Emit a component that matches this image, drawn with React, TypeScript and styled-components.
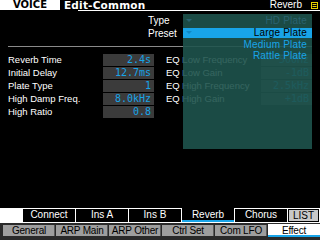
import React from 'react';
import styled, { createGlobalStyle } from 'styled-components';

const CYAN = '#18a4e8';

const GlobalStyle = createGlobalStyle`
  html, body { margin: 0; padding: 0; background: #000; }
  body {
    width: 320px;
    height: 240px;
    overflow: hidden;
    font-family: "Liberation Sans", Arial, sans-serif;
  }
`;

const Screen = styled.div`
  position: relative;
  width: 320px;
  height: 240px;
  background: #000;
  color: #fff;
  display: flex;
  flex-direction: column;
  overflow: hidden;
`;

const TitleBar = styled.div`
  display: flex;
  align-items: flex-start;
  height: 10px;
`;

const VoiceTag = styled.div`
  width: 60px;
  height: 10px;
  background: #fff;
  color: #000;
  font: bold 10px/10px "DejaVu Sans", sans-serif;
  text-align: center;
`;

const TitleText = styled.div`
  margin-left: 4px;
  font: bold 10.5px/10px "DejaVu Sans", sans-serif;
  letter-spacing: 0.2px;
`;

const TopRight = styled.div`
  margin-left: auto;
  display: flex;
  align-items: center;
  gap: 9px;
  padding-right: 2px;
  font-size: 10px;
  line-height: 10px;
`;

const TitleRule = styled.div`
  height: 1px;
  margin-left: 78px;
  background: #fff;
`;

const Header = styled.div`
  margin-top: 3px;
  padding-left: 148px;
`;

const HeaderLabel = styled.div`
  height: 13px;
  font-size: 10px;
  line-height: 13px;
`;

const Divider = styled.div`
  height: 1px;
  margin: 6px 8px 0;
  background: #8a8a8a;
`;

const Params = styled.div`
  display: flex;
  gap: 12px;
  margin: 7px 8px 0;
`;

const ParamColumn = styled.div`
  display: flex;
  flex-direction: column;
  gap: 2px;
`;

const ParamRow = styled.div`
  display: grid;
  grid-template-columns: 95px 51px;
  height: 11px;
`;

const ParamLabel = styled.div`
  font-size: 9.5px;
  line-height: 12px;
  white-space: nowrap;
`;

const ValueBox = styled.div`
  background: #3b3b3b;
  color: ${CYAN};
  font: 10px/11px "DejaVu Sans Mono", monospace;
  text-align: right;
  padding-right: 3px;
`;

const Spacer = styled.div`
  flex: 1;
`;

const TabRowTop = styled.div`
  display: flex;
  height: 15px;
  background: #fff;
  padding-left: 23px;
`;

const TopTab = styled.div<{ $active?: boolean }>`
  width: 52px;
  margin: ${p => (p.$active ? '0 1px 1px 0' : '1px 1px 1px 0')};
  background: #000;
  color: #fff;
  font-size: 10px;
  line-height: ${p => (p.$active ? '13px' : '12px')};
  text-align: center;
  box-shadow: ${p => (p.$active ? `inset 0 -2px 0 ${CYAN}` : 'none')};
`;

const ListButton = styled.div`
  width: 29px;
  height: 11px;
  margin: 1px 0;
  border: 1px solid #000;
  background: #c8c8c8;
  color: #000;
  font-size: 10px;
  line-height: 11px;
  text-align: center;
`;

const TabRowBottom = styled.div`
  display: flex;
  height: 15px;
  background: #2a2a2a;
  padding: 2px 0 0 3px;
  gap: 1px;
`;

const BottomTab = styled.div<{ $active?: boolean }>`
  width: 52px;
  height: ${p => (p.$active ? '13px' : '11px')};
  margin-top: ${p => (p.$active ? '-1px' : '0')};
  background: ${p => (p.$active ? '#fff' : '#9e9e9e')};
  color: #000;
  font-size: 10px;
  line-height: ${p => (p.$active ? '13px' : '11px')};
  text-align: center;
  letter-spacing: -0.2px;
  white-space: nowrap;
  box-shadow: ${p => (p.$active ? `inset 0 -2px 0 ${CYAN}` : 'inset -1px 0 0 #5a5a5a')};
`;

const Popup = styled.div`
  position: absolute;
  left: 183px;
  top: 14px;
  width: 129px;
  height: 135px;
  background: rgba(30, 83, 76, 0.9);
`;

const PopupItem = styled.div<{ $state: 'dim' | 'selected' | 'normal'; $h: number; $gap: number }>`
  position: relative;
  height: ${p => p.$h}px;
  margin-top: ${p => p.$gap}px;
  padding-right: 5px;
  background: ${p => (p.$state === 'selected' ? CYAN : 'transparent')};
  color: ${p => (p.$state === 'selected' ? '#000' : p.$state === 'dim' ? '#2a6270' : CYAN)};
  font-size: 10px;
  line-height: ${p => p.$h}px;
  letter-spacing: 0.2px;
  text-align: right;
`;

const Arrow = styled.svg`
  position: absolute;
  left: 3px;
  top: 50%;
  margin-top: -2px;
`;

const ListIcon = () => (
  <svg width="7" height="7" viewBox="0 0 7 7">
    <rect x="0.5" y="0.5" width="6" height="6" fill="none" stroke="#e8d400" />
    <rect x="1.5" y="2" width="4" height="1" fill="#e8d400" />
    <rect x="1.5" y="4" width="4" height="1" fill="#e8d400" />
  </svg>
);

const leftParams = [
  ['Reverb Time', '2.4s'],
  ['Initial Delay', '12.7ms'],
  ['Plate Type', '1'],
  ['High Damp Freq.', '8.0kHz'],
  ['High Ratio', '0.8'],
];

const rightParams = [
  ['EQ Low Frequency', '500Hz'],
  ['EQ Low Gain', '-1dB'],
  ['EQ High Frequency', '2.5kHz'],
  ['EQ High Gain', '+1dB'],
];

const topTabs = ['Connect', 'Ins A', 'Ins B', 'Reverb', 'Chorus'];
const bottomTabs = ['General', 'ARP Main', 'ARP Other', 'Ctrl Set', 'Com LFO', 'Effect'];

const App: React.FC = () => {
  return (
    <Screen>
      <GlobalStyle />
      <TitleBar>
        <VoiceTag>VOICE</VoiceTag>
        <TitleText>Edit-Common</TitleText>
        <TopRight>
          Reverb
          <ListIcon />
        </TopRight>
      </TitleBar>
      <TitleRule />

      <Header>
        <HeaderLabel>Type</HeaderLabel>
        <HeaderLabel>Preset</HeaderLabel>
      </Header>
      <Divider />

      <Params>
        <ParamColumn>
          {leftParams.map(([label, value]) => (
            <ParamRow key={label}>
              <ParamLabel>{label}</ParamLabel>
              <ValueBox>{value}</ValueBox>
            </ParamRow>
          ))}
        </ParamColumn>
        <ParamColumn>
          {rightParams.map(([label, value]) => (
            <ParamRow key={label}>
              <ParamLabel>{label}</ParamLabel>
              <ValueBox>{value}</ValueBox>
            </ParamRow>
          ))}
        </ParamColumn>
      </Params>

      <Spacer />

      <TabRowTop>
        {topTabs.map(t => (
          <TopTab key={t} $active={t === 'Reverb'}>{t}</TopTab>
        ))}
        <ListButton>LIST</ListButton>
      </TabRowTop>
      <TabRowBottom>
        {bottomTabs.map(t => (
          <BottomTab key={t} $active={t === 'Effect'}>{t}</BottomTab>
        ))}
      </TabRowBottom>

      <Popup>
        <PopupItem $state="dim" $h={13} $gap={0}>
          <Arrow width="6" height="3" viewBox="0 0 6 3">
            <path d="M0 0H6L3 3Z" fill="#2a6270" />
          </Arrow>
          HD Plate
        </PopupItem>
        <PopupItem $state="selected" $h={10} $gap={1}>
          <Arrow width="6" height="3" viewBox="0 0 6 3">
            <path d="M0 0H6L3 3Z" fill="#1188c4" />
          </Arrow>
          Large Plate
        </PopupItem>
        <PopupItem $state="normal" $h={11} $gap={1}>Medium Plate</PopupItem>
        <PopupItem $state="normal" $h={11} $gap={0}>Rattle Plate</PopupItem>
      </Popup>
    </Screen>
  );
};

export default App;
